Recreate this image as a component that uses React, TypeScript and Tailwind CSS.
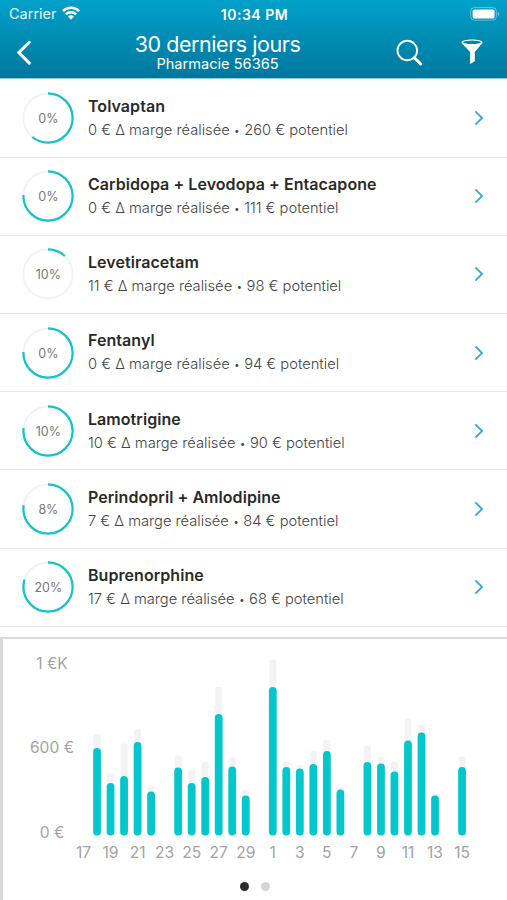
import { FC } from "react";

interface Molecule {
  name: string;
  percent: number;
  progress: number;
  realised: number;
  potential: number;
}

interface Day {
  label: string;
  total?: number;
  value?: number;
}

const molecules: Molecule[] = [
  { name: "Tolvaptan", percent: 0, progress: 0.61, realised: 0, potential: 260 },
  { name: "Carbidopa + Levodopa + Entacapone", percent: 0, progress: 0.757, realised: 0, potential: 111 },
  { name: "Levetiracetam", percent: 10, progress: 0.12, realised: 11, potential: 98 },
  { name: "Fentanyl", percent: 0, progress: 0.757, realised: 0, potential: 94 },
  { name: "Lamotrigine", percent: 10, progress: 0.77, realised: 10, potential: 90 },
  { name: "Perindopril + Amlodipine", percent: 8, progress: 0.775, realised: 7, potential: 84 },
  { name: "Buprenorphine", percent: 20, progress: 0.8, realised: 17, potential: 68 },
];

// bar heights in pixels
const days: Day[] = [
  { label: "17" },
  { label: "", total: 101.5, value: 87.5 },
  { label: "19", total: 62, value: 52.5 },
  { label: "", total: 92, value: 59.5 },
  { label: "21", total: 106.5, value: 93.5 },
  { label: "", total: 49, value: 44 },
  { label: "23" },
  { label: "", total: 80, value: 68 },
  { label: "25", total: 65.5, value: 52.5 },
  { label: "", total: 73.5, value: 58.5 },
  { label: "27", total: 148.5, value: 121.5 },
  { label: "", total: 78, value: 69 },
  { label: "29", total: 45.5, value: 40 },
  { label: "" },
  { label: "1", total: 176, value: 148.5 },
  { label: "", total: 74, value: 68.5 },
  { label: "3", total: 70.5, value: 67 },
  { label: "", total: 84.5, value: 71.5 },
  { label: "5", total: 95.5, value: 84.5 },
  { label: "", total: 48, value: 46 },
  { label: "7" },
  { label: "", total: 89.5, value: 73.5 },
  { label: "9", total: 78.5, value: 72 },
  { label: "", total: 74, value: 64 },
  { label: "11", total: 117.5, value: 95 },
  { label: "", total: 110.5, value: 103 },
  { label: "13", total: 42.5, value: 40 },
  { label: "" },
  { label: "15", total: 79, value: 68.5 },
];

const Header: FC = () => (
  <header className="h-[79.4px] shrink-0 border-b border-[#8fd0e0] bg-linear-to-b from-[#02a1ca] to-[#00779d] text-white">
    <div className="grid h-7 grid-cols-3 items-center pr-[7px] pl-[9px]">
      <div className="flex items-center gap-1.5">
        <span className="text-[14.5px] text-white/90">Carrier</span>
        <svg className="-ml-px -mt-[3px]" width="18" height="14" viewBox="0 0 18 14" fill="none" stroke="white" strokeWidth="2.4">
          <path d="M0.9 5.1a11.6 11.6 0 0 1 16.2 0" />
          <path d="M3.8 8.4a7.4 7.4 0 0 1 10.4 0" />
          <path d="M9 13.7 6 10.6a4.3 4.3 0 0 1 6 0Z" fill="white" stroke="none" />
        </svg>
      </div>
      <span className="text-center text-[14px] font-semibold tracking-[0.5px] whitespace-nowrap">10:34 PM</span>
      <svg className="-mt-px justify-self-end" width="30" height="14" viewBox="0 0 30 14">
        <rect x="0.6" y="0.6" width="25.8" height="12.6" rx="3.8" fill="none" stroke="white" strokeOpacity="0.4" />
        <rect x="2.6" y="2.4" width="22" height="9.2" rx="2.2" fill="white" />
        <path d="M28 4.8c1.6 0.6 1.6 3.6 0 4.2Z" fill="white" fillOpacity="0.5" />
      </svg>
    </div>
    <div className="grid h-12 grid-cols-[100px_1fr_100px] items-center">
      <svg className="ml-4" width="16" height="26" viewBox="0 0 16 26" fill="none" stroke="white" strokeWidth="3" strokeLinecap="round">
        <path d="M13.3 3.3 2.8 13.6l10.5 10.5" />
      </svg>
      <div className="-translate-x-9 pt-[2px] text-center whitespace-nowrap">
        <h1 className="text-[21.5px] leading-[22px] tracking-[-0.45px]">30 derniers jours</h1>
        <p className="text-[14.6px] leading-[18px]">Pharmacie 56365</p>
      </div>
      <div className="-ml-[12px] flex items-center gap-[38px]">
        <svg width="28" height="28" viewBox="0 0 28 28" fill="none" stroke="white">
          <circle cx="12.3" cy="12.5" r="9.8" strokeWidth="1.9" />
          <path d="m19.3 19.6 6.4 6.4" strokeWidth="3" strokeLinecap="round" />
        </svg>
        <svg width="22" height="26" viewBox="0 0 22 26" fill="white">
          <path d="M0.4 3.3C0.4 1.4 5.1 0.4 11 0.4s10.6 1 10.6 2.9c0 0.7-0.4 1.1-1 1.7l-6.8 8.1v9.2l-4.7 2.8V13.1L1.5 5C0.8 4.4 0.4 4 0.4 3.3Z" />
          <ellipse cx="11" cy="3.2" rx="8.8" ry="1.7" fill="#0088ae" />
        </svg>
      </div>
    </div>
  </header>
);

interface ProgressRingProps {
  percent: number;
  progress: number;
}

const ProgressRing: FC<ProgressRingProps> = ({ percent, progress }) => (
  <div className="grid size-[52px] place-items-center">
    <svg className="col-start-1 row-start-1" width="52" height="52" viewBox="0 0 52 52" fill="none">
      <circle cx="26" cy="26" r="24.6" stroke="#f1f2f3" strokeWidth="2" />
      <circle
        cx="26"
        cy="26"
        r="24.6"
        stroke="#13c2ca"
        strokeWidth="2.2"
        pathLength={1}
        strokeDasharray={`${progress} 1`}
        transform="rotate(-90 26 26)"
      />
    </svg>
    <span className="col-start-1 row-start-1 pt-[3px] text-[12.5px] text-[#777]">{percent}%</span>
  </div>
);

const MoleculeRow: FC<{ molecule: Molecule }> = ({ molecule }) => (
  <li className="flex h-[78.2px] items-center border-b border-[#e8e8e8] pl-[22.4px]">
    <ProgressRing percent={molecule.percent} progress={molecule.progress} />
    <div className="ml-[13.6px] flex-1 pt-[1.6px] whitespace-nowrap">
      <h2 className="text-base leading-6 font-semibold tracking-[0.06px] text-[#2a2a2a]">{molecule.name}</h2>
      <p className="text-[14.7px] leading-[25px] font-light text-[#444]">
        {molecule.realised} € Δ marge réalisée <span className="text-[11px]">•</span>{" "}
        {molecule.potential} € potentiel
      </p>
    </div>
    <svg className="mr-[23px]" width="10" height="16" viewBox="0 0 10 16" fill="none" stroke="#36a9cf" strokeWidth="1.8">
      <path d="m1.4 1.4 6.7 6.6-6.7 6.6" />
    </svg>
  </li>
);

const BASELINE = 835.5;
const STEP = 13.52;

const SalesChart: FC = () => (
  <svg width="504" height="233" viewBox="3 639 504 233" fontSize="15.6" fill="#a3a3a3" textAnchor="middle">
    <text x="52" y="669">1 €K</text>
    <text x="52" y="753.3">600 €</text>
    <text x="52" y="837.7">0 €</text>
    {days.map((day, i) => {
      const x = 83.5 + STEP * i;
      return (
        <g key={i}>
          {day.total && (
            <rect x={x - 3.5} y={BASELINE - day.total} width="7" height={day.total} rx="2" fill="#f3f3f3" />
          )}
          {day.value && (
            <rect x={x - 3.9} y={BASELINE - day.value} width="7.8" height={day.value} rx="3.9" fill="#04c7cc" />
          )}
          {day.label && (
            <text x={x} y="858.3">
              {day.label}
            </text>
          )}
        </g>
      );
    })}
  </svg>
);

export default function App() {
  return (
    <div className="flex h-[900px] w-[507px] flex-col overflow-hidden bg-white font-['Inter',sans-serif]">
      <Header />
      <ul className="h-[557.6px] shrink-0">
        {molecules.map((molecule) => (
          <MoleculeRow key={molecule.name} molecule={molecule} />
        ))}
      </ul>
      <section className="flex-1 border-t-2 border-l-3 border-[#dadada]">
        <SalesChart />
        <div className="flex justify-center gap-3 pt-[10.5px]">
          <span className="size-[9px] rounded-full bg-[#2d2d2d]" />
          <span className="size-[9px] rounded-full bg-[#d4d4d4]" />
        </div>
      </section>
    </div>
  );
}
